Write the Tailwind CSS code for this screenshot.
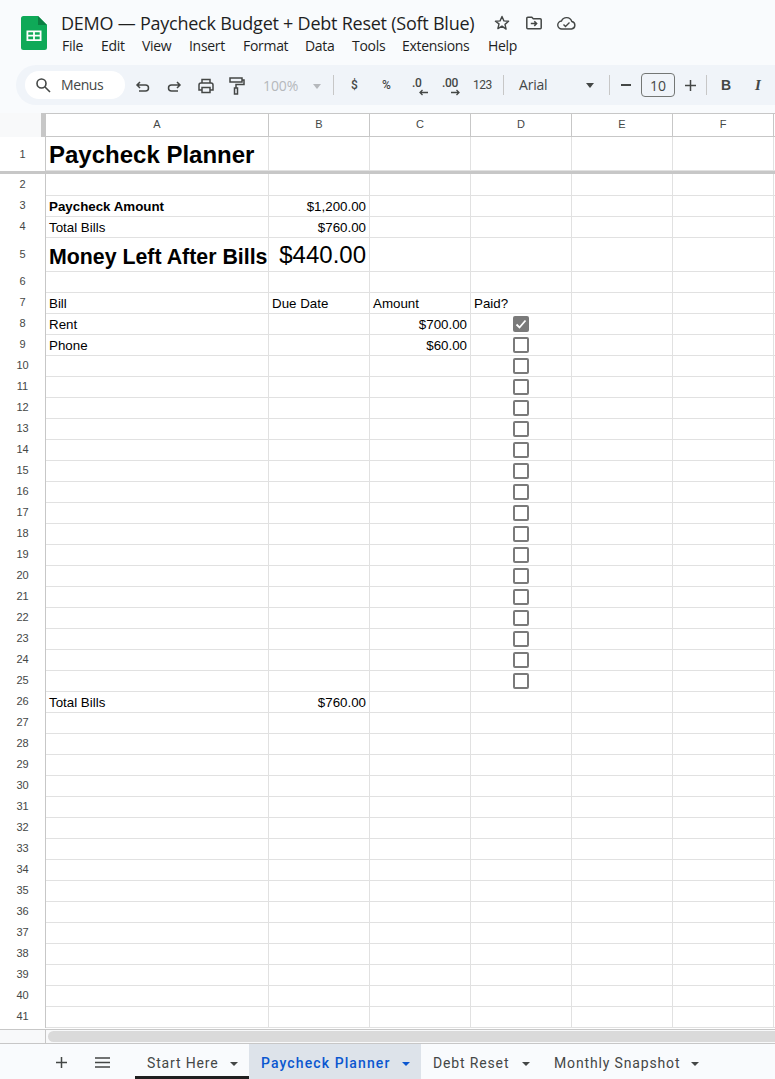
<!DOCTYPE html>
<html lang="en">
  <head>
    <meta charset="UTF-8" />
    <meta name="viewport" content="width=device-width, initial-scale=1.0" />
    <title>DEMO — Paycheck Budget + Debt Reset (Soft Blue)</title>
    <script src="https://cdn.jsdelivr.net/npm/@tailwindcss/browser@4"></script>
  </head>
  <body class="bg-[#f9fbfd] h-screen overflow-hidden flex flex-col font-['Roboto',sans-serif] text-[#444746]">
    <!-- title bar -->
    <header class="h-[65px] shrink-0 flex pl-[21px]">
      <svg class="mt-[16px] w-[26px] h-[34px] shrink-0" viewBox="0 0 26 34">
        <path d="M2.5 0H17l9 9v22.5a2.5 2.5 0 0 1-2.5 2.5h-21A2.5 2.5 0 0 1 0 31.500v-29A2.500 2.500 0 0 1 2.500 0z" fill="#0fa958" />
        <path d="M17 0l9 9h-9z" fill="#0b8043" />
        <path d="M5.500 14.500h15v10.500h-15z" fill="#fff" />
        <path d="M7.300 16.300h4.800v2.500H7.300zM13.900 16.300h4.800v2.500h-4.800zM7.300 20.600h4.800v2.600H7.300zM13.900 20.600h4.800v2.600h-4.800z" fill="#0fa958" />
      </svg>
      <div class="ml-[14px] flex flex-col">
        <div class="flex items-center h-[24px] mt-[11px]">
          <span class="text-[18px] leading-[24px] text-[#1f1f1f] font-['Open_Sans',sans-serif] tracking-[-0.24px] whitespace-nowrap w-[414px]">DEMO — Paycheck Budget + Debt Reset (Soft Blue)</span>
          <svg class="ml-[19px] w-[16px] h-[16px]" viewBox="0 0 16 16" fill="none" stroke="#444746" stroke-width="1.400" stroke-linejoin="round"><path d="M8 1.500l1.900 4.400 4.700.4-3.600 3.100 1.100 4.700L8 11.100l-4.100 2.500L5 8.900 1.400 6.300l4.700-.4z" /></svg>
          <svg class="ml-[16px] w-[16px] h-[14px]" viewBox="0 0 16 14" fill="none" stroke="#444746" stroke-width="1.500"><path d="M.8 2.200A1 1 0 0 1 1.800 1.200h4l1.500 1.500h6.900a1 1 0 0 1 1 1v8.100a1 1 0 0 1-1 1H1.800a1 1 0 0 1-1-1z" /><path d="M4.800 7.600h5.500M8.300 5.300l2.300 2.300-2.300 2.300" /></svg>
          <svg class="ml-[15px] w-[19px] h-[14px]" viewBox="0 0 19 14" fill="none" stroke="#444746" stroke-width="1.400"><path d="M5 13A4 4 0 0 1 4.500 5 5.500 5.500 0 0 1 14.800 5.500 3.800 3.800 0 0 1 14.500 13z" /><path d="M6.500 8.500l2 2 4-4" /></svg>
        </div>
        <nav class="flex h-[20px] mt-[1px] ml-px text-[14px] leading-[20px] text-[#1f1f1f] font-['Open_Sans',sans-serif] tracking-[-0.3px]">
          <span class="w-[39px]">File</span>
          <span class="w-[41px]">Edit</span>
          <span class="w-[47px]">View</span>
          <span class="w-[54px]">Insert</span>
          <span class="w-[62px]">Format</span>
          <span class="w-[47px]">Data</span>
          <span class="w-[50px]">Tools</span>
          <span class="w-[86px]">Extensions</span>
          <span>Help</span>
        </nav>
      </div>
    </header>

    <!-- toolbar -->
    <div class="h-[40px] shrink-0 ml-[16px] bg-[#f0f4f9] rounded-l-[20px] flex items-center overflow-hidden text-[#444746]">
      <div class="ml-[9px] w-[100px] h-[28px] bg-white rounded-full flex items-center shrink-0">
        <svg class="ml-[10px] w-[16px] h-[16px]" viewBox="0 0 16 16" fill="none" stroke="#444746" stroke-width="1.600"><circle cx="6.500" cy="6.500" r="4.500" /><path d="M10 10l5 5" /></svg>
        <span class="ml-[10px] text-[14px] font-['Open_Sans',sans-serif] tracking-[-0.4px] -mt-[2px]">Menus</span>
      </div>
      <svg class="ml-[10px] w-[16px] h-[16px] shrink-0 mt-[2px]" viewBox="0 0 16 16" fill="none" stroke="#444746" stroke-width="1.500"><path d="M5 4L2 7l3 3M2 7h8.500a3 3 0 0 1 0 6H4" /></svg>
      <svg class="ml-[15px] w-[16px] h-[16px] shrink-0 mt-[2px]" viewBox="0 0 16 16" fill="none" stroke="#444746" stroke-width="1.500"><path d="M11 4l3 3-3 3M14 7H5.500a3 3 0 0 0 0 6H12" /></svg>
      <svg class="ml-[16px] w-[16px] h-[16px] shrink-0 mt-[2px]" viewBox="0 0 16 16" fill="none" stroke="#444746" stroke-width="1.500"><path d="M4 5V1.500h8V5M4 12H1V7a2 2 0 0 1 2-2h10a2 2 0 0 1 2 2v5h-3" /><path d="M4 9.500h8v5H4z" /></svg>
      <svg class="ml-[15px] w-[16px] h-[18px] shrink-0 mt-[2px]" viewBox="0 0 16 18" fill="none" stroke="#444746" stroke-width="1.500"><path d="M1 1h12v4H1zM13 3h2v4.500H7V11" /><path d="M5.500 11h3v6h-3z" /></svg>
      <span class="ml-[18px] w-[37px] text-[14px] text-[#b5b8bc] font-['Open_Sans',sans-serif] tracking-[-0.1px]">100%</span>
      <span class="ml-[13px] w-0 h-0 border-x-[4.500px] border-x-transparent border-t-[5px] border-t-[#b5b8bc] mt-[2px]"></span>
      <span class="ml-[12px] w-px h-[20px] bg-[#c7c7c7]"></span>
      <span class="ml-[17px] w-[10px] text-[12px] font-medium">$</span>
      <span class="ml-[21px] w-[14px] text-[12px] font-medium">%</span>
      <span class="ml-[16px] w-[17px] relative h-[24px] text-[12px] font-medium leading-[20px] tracking-[-0.3px]">.0<svg class="absolute left-[7px] top-[16px] w-[9px] h-[7px]" viewBox="0 0 9 7" fill="none" stroke="#444746" stroke-width="1.300"><path d="M9 3.500H1M3.500 1L1 3.500 3.500 6" /></svg></span>
      <span class="ml-[13px] w-[18px] relative h-[24px] text-[12px] font-medium leading-[20px] tracking-[-0.3px]">.00<svg class="absolute left-[9px] top-[16px] w-[9px] h-[7px]" viewBox="0 0 9 7" fill="none" stroke="#444746" stroke-width="1.300"><path d="M0 3.500h8M5.500 1L8 3.500 5.500 6" /></svg></span>
      <span class="ml-[13px] w-[20px] text-[12px] tracking-[-0.5px]">123</span>
      <span class="ml-[10px] w-px h-[20px] bg-[#c7c7c7]"></span>
      <span class="ml-[15px] w-[60px] text-[14px] font-['Open_Sans',sans-serif] tracking-[-0.2px] -mt-[2px]">Arial</span>
      <span class="ml-[7px] w-0 h-0 border-x-[4.500px] border-x-transparent border-t-[5px] border-t-[#444746]"></span>
      <span class="ml-[15px] w-px h-[20px] bg-[#c7c7c7]"></span>
      <span class="ml-[11px] w-[10px] h-[1.500px] bg-[#444746]"></span>
      <span class="ml-[10px] w-[34px] h-[24px] border border-[#747775] rounded-[4px] flex items-center justify-center text-[14px] font-['Open_Sans',sans-serif]">10</span>
      <svg class="ml-[10px] w-[11px] h-[11px]" viewBox="0 0 11 11" stroke="#444746" stroke-width="1.500"><path d="M0 5.500h11M5.500 0v11" /></svg>
      <span class="ml-[10px] w-px h-[20px] bg-[#c7c7c7]"></span>
      <span class="ml-[14px] w-[12px] text-[14px] font-bold font-['Liberation_Sans',sans-serif]">B</span>
      <span class="ml-[22px] w-[10px] text-[15px] font-bold italic font-['Liberation_Serif',serif]">I</span>
    </div>
    <div class="h-[8px] shrink-0"></div>

    <!-- grid -->
    <main class="flex-1 min-h-0 bg-white overflow-hidden font-['Liberation_Sans',sans-serif] text-[13.33px] leading-[18px] text-black" id="sheet">
      <div class="flex h-[24px] border-y border-[#c7c7c7] bg-white text-[11px] text-[#444746]">
        <div class="w-[46px] shrink-0 flex border-r border-[#c7c7c7] bg-[#f8f9fa] -mt-px h-[24px]">
          <div class="w-[41px]"></div>
          <div class="w-[4px] bg-[#c7c7c7]"></div>
        </div>
        <div class="w-[223px] shrink-0 border-r border-[#c7c7c7] flex items-center justify-center pb-[2px]">A</div>
        <div class="w-[101px] shrink-0 border-r border-[#c7c7c7] flex items-center justify-center pb-[2px]">B</div>
        <div class="w-[101px] shrink-0 border-r border-[#c7c7c7] flex items-center justify-center pb-[2px]">C</div>
        <div class="w-[101px] shrink-0 border-r border-[#c7c7c7] flex items-center justify-center pb-[2px]">D</div>
        <div class="w-[101px] shrink-0 border-r border-[#c7c7c7] flex items-center justify-center pb-[2px]">E</div>
        <div class="w-[101px] shrink-0 border-r border-[#c7c7c7] flex items-center justify-center pb-[2px]">F</div>
      </div>
      <div id="rows"></div>
    </main>

    <!-- horizontal scrollbar -->
    <div class="h-[14px] shrink-0 flex bg-[#f8f9fa] border-t border-[#c7c7c7]">
      <div class="w-[46px] border-r border-[#c7c7c7] shrink-0"></div>
      <div class="flex-1 ml-[2px] my-px bg-[#dadada] rounded-l-full"></div>
    </div>

    <!-- sheet tabs -->
    <footer class="h-[36px] shrink-0 border-t border-[#c7c7c7] flex text-[14px] font-normal font-['Roboto',sans-serif] tracking-[0.85px] text-[#444746] whitespace-nowrap">
      <svg class="ml-[56px] mt-[13px] w-[11px] h-[11px]" viewBox="0 0 11 11" stroke="#444746" stroke-width="1.500"><path d="M0 5.500h11M5.500 0v11" /></svg>
      <svg class="ml-[28px] mt-[13px] w-[15px] h-[11px]" viewBox="0 0 15 11" stroke="#444746" stroke-width="1.500"><path d="M0 1h15M0 5.500h15M0 10h15" /></svg>
      <div class="ml-[25px] w-[114px] h-[35px] pl-[12px] flex items-center border-b-[3px] border-[#1f1f1f] pt-[7px]">
        Start Here<span class="ml-[11px] w-0 h-0 border-x-[4px] border-x-transparent border-t-[4px] border-t-[#444746]"></span>
      </div>
      <div class="w-[172px] h-[35px] pl-[12px] pt-[4px] flex items-center bg-[#dde3ea] text-[#0b57d0] font-medium tracking-[1.1px]">
        Paycheck Planner<span class="ml-[12px] w-0 h-0 border-x-[4px] border-x-transparent border-t-[4px] border-t-[#0b57d0]"></span>
      </div>
      <div class="w-[121px] h-[35px] pl-[12px] pt-[4px] flex items-center">
        Debt Reset<span class="ml-[13px] w-0 h-0 border-x-[4px] border-x-transparent border-t-[4px] border-t-[#444746]"></span>
      </div>
      <div class="h-[35px] pl-[12px] pt-[4px] flex items-center">
        Monthly Snapshot<span class="ml-[11px] w-0 h-0 border-x-[4px] border-x-transparent border-t-[4px] border-t-[#444746]"></span>
      </div>
    </footer>

    <script>
      const cellLine = "shrink-0 border-r border-[#e1e1e1] px-[3px] flex items-end whitespace-nowrap overflow-visible";
      const rightCell = " justify-end";
      // row number -> height and cell text
      const rowData = {
        1: { h: "h-[34px]", a: "Paycheck Planner", aCls: "text-[24px] font-bold leading-[30px]" },
        2: { h: "h-[22px]" },
        3: { a: "Paycheck Amount", aCls: "font-bold", b: "$1,200.00" },
        4: { a: "Total Bills", b: "$760.00" },
        5: { h: "h-[34px]", a: "Money Left After Bills", aCls: "text-[21.330px] font-bold leading-[28px]", b: "$440.00", bCls: "text-[24px] leading-[33px]" },
        7: { a: "Bill", b: "Due Date", bLeft: true, c: "Amount", cLeft: true, d: "Paid?" },
        8: { a: "Rent", c: "$700.00", box: "on" },
        9: { a: "Phone", c: "$60.00", box: "off" },
        26: { a: "Total Bills", b: "$760.00" },
      };

      const checkOn =
        '<span class="w-[16px] h-[16px] rounded-[2px] bg-[#7a7a7a] flex items-center justify-center"><svg class="w-[12px] h-[12px]" viewBox="0 0 12 12" fill="none" stroke="#fff" stroke-width="1.800"><path d="M1.500 6.500l3 3 6-7" /></svg></span>';
      const checkOff = '<span class="w-[16px] h-[16px] rounded-[2px] border-2 border-[#7a7a7a] bg-white"></span>';

      let html = "";
      for (let n = 1; n <= 41; n++) {
        const r = rowData[n] || {};
        if (n >= 10 && n <= 25) r.box = "off";
        const box = r.box === "on" ? checkOn : r.box === "off" ? checkOff : "";
        html += `<div class="flex ${r.h || "h-[21px]"} border-b border-[#e1e1e1]">
          <div class="w-[46px] shrink-0 border-r border-[#c7c7c7] bg-white text-[#444746] text-[11px] flex items-center justify-center -mb-px ${n === 1 ? "" : "pb-[3px]"}">${n}</div>
          <div class="w-[223px] ${cellLine}"><span class="${r.aCls || ""}">${r.a || ""}</span></div>
          <div class="w-[101px] ${cellLine} ${r.bLeft ? "" : rightCell}"><span class="${r.bCls || ""}">${r.b || ""}</span></div>
          <div class="w-[101px] ${cellLine} ${r.cLeft ? "" : rightCell}">${r.c || ""}</div>
          <div class="w-[101px] ${cellLine} ${box ? "justify-center !items-center" : ""}">${box || r.d || ""}</div>
          <div class="w-[101px] ${cellLine}"></div>
          <div class="w-[101px] ${cellLine}"></div>
        </div>`;
        if (n === 1) html += '<div class="h-[3px] bg-[#c7c7c7]"></div>';
      }
      document.getElementById("rows").innerHTML = html;
    </script>
  </body>
</html>
